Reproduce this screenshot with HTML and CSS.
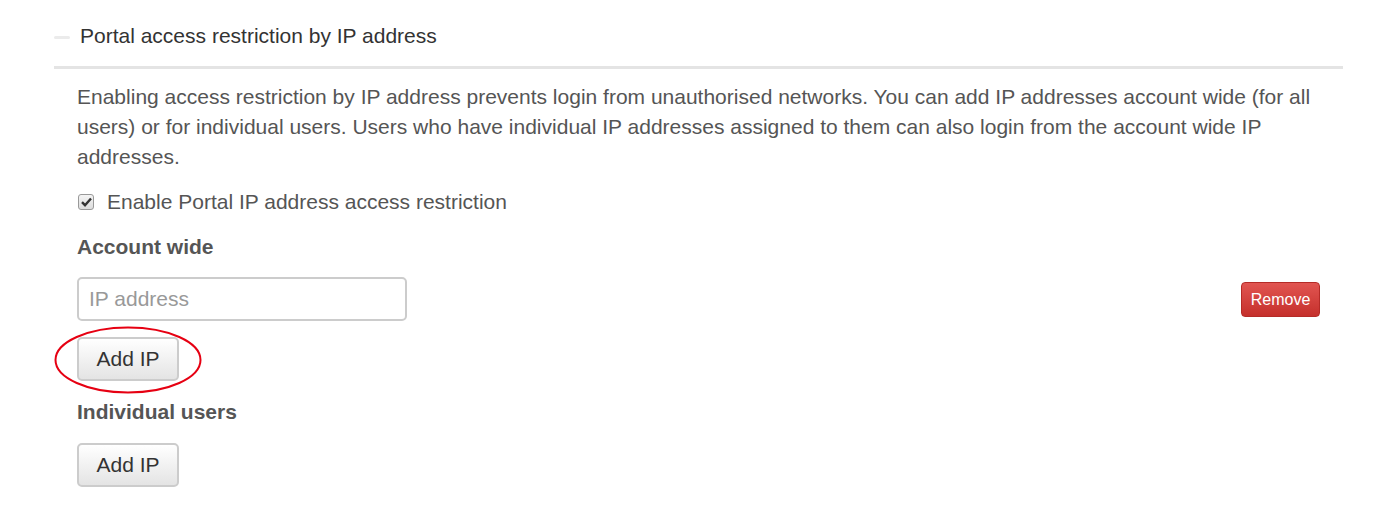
FILE: index.html
```html
<!DOCTYPE html>
<html>
<head>
<meta charset="utf-8">
<link rel="stylesheet" href="styles.css">
</head>
<body>
<div class="panel">
  <div class="panel-head">
    <span class="toggle"></span>
    <span class="title">Portal access restriction by IP address</span>
  </div>
  <div class="panel-body">
    <p class="intro">Enabling access restriction by IP address prevents login from unauthorised networks. You can add IP addresses account wide (for all users) or for individual users. Users who have individual IP addresses assigned to them can also login from the account wide IP addresses.</p>
    <label class="check">
      <span class="box"><svg width="11" height="10" viewBox="0 0 11 10"><path d="M1 5.2 L4 8.2 L10 1.5" fill="none" stroke="#333" stroke-width="2.4"/></svg></span>
      <span>Enable Portal IP address access restriction</span>
    </label>
    <h4 class="sub">Account wide</h4>
    <div class="ip-row">
      <input class="ip-input" type="text" placeholder="IP address">
      <button class="btn-remove">Remove</button>
    </div>
    <div class="add-wrap">
      <button class="btn">Add IP</button>
      <svg class="circle" width="150" height="70" viewBox="0 0 150 70"><ellipse cx="74" cy="34" rx="72.5" ry="32.5" fill="none" stroke="#e60012" stroke-width="2"/></svg>
    </div>
    <h4 class="sub sub-gap">Individual users</h4>
    <div class="add-wrap">
      <button class="btn">Add IP</button>
    </div>
  </div>
</div>
</body>
</html>
```
FILE: styles.css
```css
* { box-sizing: border-box; }
body {
  margin: 0;
  background: #fff;
  font-family: "Liberation Sans", Arial, sans-serif;
  font-size: 21px;
  color: #555;
}
.panel {
  margin-left: 54px;
  width: 1289px;
}
.panel-head {
  display: flex;
  align-items: center;
  height: 69px;
  padding-top: 6px;
  border-bottom: 3px solid #e4e4e4;
}
.toggle {
  width: 16px;
  height: 3px;
  background: #ebebeb;
  border-radius: 2px;
  margin-right: 10px;
  margin-top: 2px;
}
.title {
  color: #333;
  font-size: 21px;
}
.panel-body {
  padding: 13px 23px 0 23px;
}
.intro {
  margin: 0;
  line-height: 30px;
}
.check {
  display: flex;
  align-items: center;
  height: 30px;
  margin-top: 15px;
}
.box {
  width: 16px;
  height: 16px;
  border: 1px solid #999;
  border-radius: 3px;
  background: linear-gradient(#f4f4f4, #dcdcdc);
  display: flex;
  align-items: center;
  justify-content: center;
  margin-left: 1px;
  margin-right: 13px;
}
.sub {
  margin: 15px 0 0 0;
  font-size: 21px;
  font-weight: bold;
  line-height: 30px;
}
.sub-gap {
  margin-top: 16px;
}
.ip-row {
  display: flex;
  justify-content: space-between;
  align-items: center;
  margin-top: 15px;
}
.ip-input {
  width: 330px;
  height: 44px;
  border: 2px solid #ccc;
  border-radius: 5px;
  padding: 0 10px;
  font-family: inherit;
  font-size: 21px;
  color: #555;
  outline: none;
}
.ip-input::placeholder { color: #999; }
.btn-remove {
  width: 79px;
  height: 35px;
  margin-top: 1px;
  border: 1px solid #b52b27;
  border-radius: 4px;
  background: linear-gradient(#e15551, #c5302c);
  color: #fff;
  font-family: inherit;
  font-size: 16px;
  padding: 0;
}
.add-wrap {
  position: relative;
  margin-top: 16px;
  height: 44px;
}
.btn {
  display: block;
  width: 102px;
  height: 44px;
  border: 2px solid #ccc;
  border-radius: 5px;
  background: linear-gradient(#fff, #e4e4e4);
  color: #333;
  font-family: inherit;
  font-size: 21px;
  padding: 0;
}
.circle {
  position: absolute;
  left: -23px;
  top: -11px;
  pointer-events: none;
}
```
